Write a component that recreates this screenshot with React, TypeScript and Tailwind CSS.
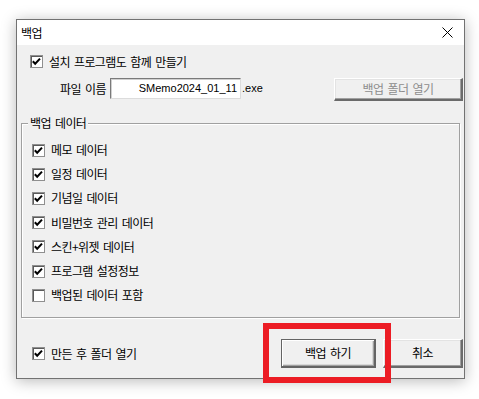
import React from "react";

const KR = { fontFamily: '"Noto Sans CJK KR", "Noto Sans", sans-serif' };

function Check({ checked }: { checked: boolean }) {
  return (
    <div className="w-[13px] h-[13px] shrink-0 bg-white border border-[#8f8f8f] shadow-[inset_1px_1px_0_#5a5a5a] flex items-center justify-center">
      {checked && (
        <svg width="11" height="11" viewBox="0 0 11 11">
          <path d="M1.8 5.2 L4.2 7.8 L9 2.6" fill="none" stroke="#000" strokeWidth="2" />
        </svg>
      )}
    </div>
  );
}

function Row({ label, checked }: { label: string; checked: boolean }) {
  return (
    <div className="h-[24.2px] flex items-center gap-[6px]">
      <Check checked={checked} />
      <span className="text-[12px] leading-[14px] tracking-[-0.6px] [word-spacing:2px] text-black">{label}</span>
    </div>
  );
}

const btn3d =
  "border-t border-l border-t-white border-l-white border-r-2 border-b-2 border-r-[#6a6a6a] border-b-[#6a6a6a] shadow-[inset_-1px_-1px_0_#a0a0a0,inset_1px_1px_0_#e3e3e3] bg-[#f0f0f0]";

export default function App() {
  const items: [string, boolean][] = [
    ["메모 데이터", true],
    ["일정 데이터", true],
    ["기념일 데이터", true],
    ["비밀번호 관리 데이터", true],
    ["스킨+위젯 데이터", true],
    ["프로그램 설정정보", true],
    ["백업된 데이터 포함", false],
  ];
  return (
    <div className="w-[479px] h-[399px] bg-white overflow-hidden relative" style={KR}>
      <div className="ml-[16px] mt-[19px] w-[449px] h-[360px] border border-[#727272] bg-[#f0f0f0] shadow-[0_2px_14px_rgba(0,0,0,0.28)] flex flex-col">
        {/* title bar */}
        <div className="h-[25px] bg-white flex items-center justify-between pl-[4px] pr-[11px]">
          <span className="text-[12px] tracking-[-0.6px] text-black">백업</span>
          <svg width="11" height="11" viewBox="0 0 11 11">
            <path d="M0.5 0.5 L10.5 10.5 M10.5 0.5 L0.5 10.5" stroke="#000" strokeWidth="1" />
          </svg>
        </div>
        {/* body */}
        <div className="flex-1 flex flex-col">
          <div className="mt-[10px] pl-[13px] h-[13px] flex items-center gap-[6px]">
            <Check checked />
            <span className="text-[12px] leading-[14px] tracking-[-0.6px] [word-spacing:2px] text-black">설치 프로그램도 함께 만들기</span>
          </div>
          <div className="mt-[10px] flex items-start">
            <span className="ml-[43px] w-[50px] h-[21px] flex items-center text-[12px] tracking-[-0.6px] [word-spacing:2px] text-black">파일 이름</span>
            <div className="w-[131px] h-[21px] bg-white border border-t-[#7a7a7a] border-l-[#7a7a7a] border-r-[#dcdcdc] border-b-[#dcdcdc] shadow-[inset_1px_1px_0_#d0d0d0] flex items-center justify-end pr-[3px]">
              <span className="text-[11px] text-black" style={{ fontFamily: '"Liberation Sans", Arial, sans-serif' }}>
                SMemo2024_01_11
              </span>
            </div>
            <span className="h-[21px] flex items-center ml-[1px] text-[11px] text-black" style={{ fontFamily: '"Liberation Sans", Arial, sans-serif' }}>
              .exe
            </span>
            <div className="flex-1" />
            <div className={`w-[129px] h-[23px] mr-[1px] flex items-center justify-center ${btn3d}`}>
              <span className="text-[12px] tracking-[-0.6px] [word-spacing:2px] text-[#8d8d8d]">백업 폴더 열기</span>
            </div>
          </div>
          {/* group box */}
          <div className="mt-[22px] ml-[4px] w-[439px] h-[195px] border border-[#a0a0a0] shadow-[1px_1px_0_#ffffff,inset_1px_1px_0_#ffffff] flex flex-col">
            <span className="-mt-[8px] ml-[6px] self-start px-[2px] bg-[#f0f0f0] text-[12px] leading-[14px] tracking-[-0.6px] [word-spacing:2px] text-black">
              백업 데이터
            </span>
            <div className="mt-[8px] pl-[10px] flex flex-col">
              {items.map(([l, c]) => (
                <Row key={l} label={l} checked={c} />
              ))}
            </div>
          </div>
          {/* bottom */}
          <div className="mt-[21px] flex items-center pl-[15px] pr-[1px]">
            <Check checked />
            <span className="ml-[6px] text-[12px] tracking-[-0.6px] [word-spacing:2px] text-black">만든 후 폴더 열기</span>
            <div className="flex-1" />
            <div className="w-[95px] h-[29px] flex items-center justify-center border border-[#646464] shadow-[inset_1px_1px_0_#ffffff,inset_-1px_-1px_0_#a0a0a0,inset_-2px_-2px_0_#d8d8d8] bg-[#f0f0f0] border-b-2 border-r-2">
              <span className="text-[12px] tracking-[-0.6px] [word-spacing:2px] text-black">백업 하기</span>
            </div>
            <div className={`ml-[7px] w-[80px] h-[29px] flex items-center justify-center ${btn3d}`}>
              <span className="text-[12px] tracking-[-0.6px] text-black">취소</span>
            </div>
          </div>
        </div>
      </div>
      {/* red annotation */}
      <div className="absolute left-[263px] top-[323px] w-[128px] h-[60px] border-[6px] border-[#ec1c24]" />
    </div>
  );
}
